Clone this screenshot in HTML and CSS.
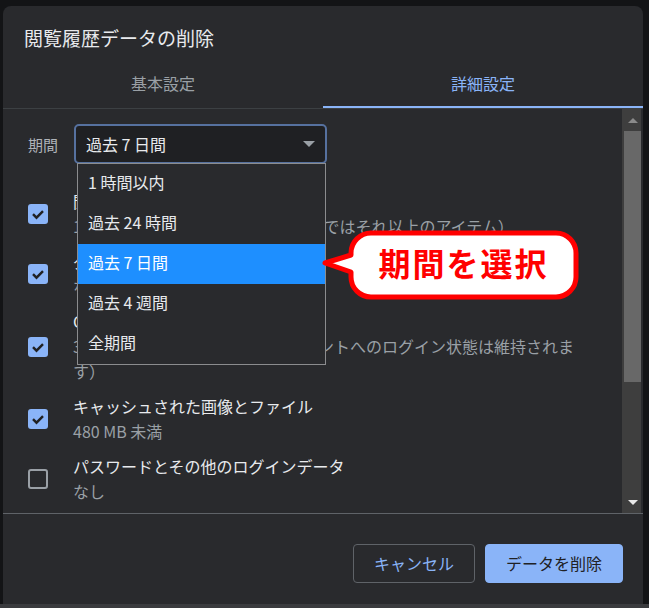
FILE: index.html
```html
<!DOCTYPE html>
<html lang="ja">
  <head>
    <meta charset="UTF-8" />
    <meta name="viewport" content="width=device-width, initial-scale=1.0" />
    <title>閲覧履歴データの削除</title>
    <link rel="stylesheet" href="styles.css">
  </head>
  <body>
    <div class="dialog">
      <h1 class="dialog-title">閲覧履歴データの削除</h1>

      <div class="tabs">
        <div class="tab">基本設定</div>
        <div class="tab active">詳細設定</div>
      </div>

      <div class="dialog-body">
        <div class="content">
          <div class="period-row">
            <span class="period-label">期間</span>
            <div class="select-wrap">
              <div class="select">
                <span>過去 7 日間</span>
                <span class="select-arrow"></span>
              </div>
              <ul class="dropdown">
                <li>1 時間以内</li>
                <li>過去 24 時間</li>
                <li class="selected">過去 7 日間</li>
                <li>過去 4 週間</li>
                <li>全期間</li>
              </ul>
            </div>
          </div>

          <div class="option-row">
            <span class="checkbox checked">
              <svg width="20" height="20" viewBox="0 0 20 20"><path d="M5 10.2 L8.5 13.7 L15 7.2" /></svg>
            </span>
            <div class="option-text">
              <div class="option-title">閲覧履歴</div>
              <div class="option-sub">1 件のアイテム（同期したデバイスではそれ以上のアイテム）</div>
            </div>
          </div>

          <div class="option-row">
            <span class="checkbox checked">
              <svg width="20" height="20" viewBox="0 0 20 20"><path d="M5 10.2 L8.5 13.7 L15 7.2" /></svg>
            </span>
            <div class="option-text">
              <div class="option-title">ダウンロード履歴</div>
              <div class="option-sub">なし</div>
            </div>
          </div>

          <div class="option-row">
            <span class="checkbox checked">
              <svg width="20" height="20" viewBox="0 0 20 20"><path d="M5 10.2 L8.5 13.7 L15 7.2" /></svg>
            </span>
            <div class="option-text">
              <div class="option-title">Cookie と他のサイトデータ</div>
              <div class="option-sub">3 個のサイトから（Google アカウントへのログイン状態は維持されます）</div>
            </div>
          </div>

          <div class="option-row">
            <span class="checkbox checked">
              <svg width="20" height="20" viewBox="0 0 20 20"><path d="M5 10.2 L8.5 13.7 L15 7.2" /></svg>
            </span>
            <div class="option-text">
              <div class="option-title">キャッシュされた画像とファイル</div>
              <div class="option-sub">480 MB 未満</div>
            </div>
          </div>

          <div class="option-row">
            <span class="checkbox"></span>
            <div class="option-text">
              <div class="option-title">パスワードとその他のログインデータ</div>
              <div class="option-sub">なし</div>
            </div>
          </div>
        </div>

        <div class="scrollbar">
          <div class="sb-btn"><span class="arrow-up"></span></div>
          <div class="sb-track"><div class="sb-thumb"></div></div>
          <div class="sb-btn"><span class="arrow-down"></span></div>
        </div>
      </div>

      <div class="dialog-footer">
        <button class="btn-cancel" type="button">キャンセル</button>
        <button class="btn-delete" type="button">データを削除</button>
      </div>

      <!-- 吹き出し -->
      <div class="callout">
        <svg width="262" height="80" viewBox="0 0 262 80">
          <path d="M49 5 H234 A20 20 0 0 1 254 25 V49 A20 20 0 0 1 234 69 H49 A20 20 0 0 1 29 49 V44 L3 35 L29 27 V25 A20 20 0 0 1 49 5 Z" />
        </svg>
        <span class="callout-text">期間を選択</span>
      </div>
    </div>
    <div class="bottom-bar"></div>
  </body>
</html>
```

FILE: styles.css
```css
html,
body {
  margin: 0;
  padding: 0;
  background-color: #131416;
}

body {
  font-family: "Noto Sans CJK JP", "Noto Sans", sans-serif;
  padding: 6px 0 0 3px;
  width: 649px;
  height: 608px;
  box-sizing: border-box;
  overflow: hidden;
}

.dialog {
  position: relative;
  width: 640px;
  height: 598px;
  background-color: #292a2d;
  border-radius: 8px 8px 0 0;
  display: flex;
  flex-direction: column;
}

.dialog-title {
  margin: 0;
  padding: 18px 21px 8px;
  font-size: 19px;
  font-weight: normal;
  line-height: 28px;
  color: #e8eaed;
}

.tabs {
  display: flex;
  border-bottom: 1px solid #3c4043;
}

.tab {
  flex: 1;
  height: 48px;
  box-sizing: border-box;
  padding-bottom: 3px;
  display: flex;
  align-items: center;
  justify-content: center;
  font-size: 16px;
  color: #9aa0a6;
}

.tab.active {
  color: #8ab4f8;
  box-shadow: inset 0 -2px 0 #8ab4f8;
}

.dialog-body {
  height: 405px;
  display: flex;
  border-bottom: 1px solid #5f6368;
  box-sizing: border-box;
}

.content {
  flex: 1;
  padding: 15px 0 0 25px;
  overflow: hidden;
  position: relative;
}

.period-row {
  display: flex;
  align-items: center;
  height: 40px;
  margin-bottom: 20px;
}

.period-label {
  width: 46px;
  font-size: 15px;
  color: #aeb3b9;
}

.select-wrap {
  position: relative;
}

.select {
  width: 253px;
  height: 40px;
  box-sizing: border-box;
  border: 2px solid #56719f;
  border-radius: 5px;
  background-color: #1f2023;
  padding: 0 10px 1px;
  display: flex;
  align-items: center;
  font-size: 16px;
  color: #e8eaed;
}

.select-arrow {
  margin-left: auto;
  border-left: 6px solid transparent;
  border-right: 6px solid transparent;
  border-top: 6px solid #9aa0a6;
}

.dropdown {
  position: absolute;
  left: 3px;
  top: 39px;
  width: 249px;
  margin: 0;
  padding: 0;
  list-style: none;
  box-sizing: border-box;
  background-color: #292a2d;
  border: 1px solid #8b8c8e;
  z-index: 2;
}

.dropdown li {
  height: 40px;
  line-height: 37px;
  padding-left: 10px;
  font-size: 16px;
  color: #e8eaed;
}

.dropdown li.selected {
  background-color: #1e8fff;
  color: #fff;
}

.option-row {
  display: flex;
  align-items: center;
  padding: 5px 0;
}

.checkbox {
  width: 20px;
  height: 20px;
  flex-shrink: 0;
  margin-right: 25px;
  box-sizing: border-box;
  border: 2px solid #9aa0a6;
  border-radius: 3px;
}

.checkbox.checked {
  border: none;
  background-color: #8ab4f8;
}

.checkbox svg {
  display: block;
}

.checkbox path {
  fill: none;
  stroke: #202124;
  stroke-width: 2.4;
}

.option-text {
  width: 512px;
  font-size: 16px;
  line-height: 25px;
}

.option-title {
  color: #e8eaed;
}

.option-sub {
  color: #9aa0a6;
}

.scrollbar {
  width: 19px;
  margin-right: 2px;
  background-color: #3e3e3e;
  display: flex;
  flex-direction: column;
}

.sb-btn {
  height: 22px;
  display: flex;
  align-items: center;
  justify-content: center;
  padding-left: 2px;
}

.arrow-up {
  border-left: 5px solid transparent;
  border-right: 5px solid transparent;
  border-bottom: 5px solid #8a8a8a;
}

.arrow-down {
  border-left: 5px solid transparent;
  border-right: 5px solid transparent;
  border-top: 5px solid #e8e8e8;
}

.sb-track {
  flex: 1;
  padding-left: 2px;
}

.sb-thumb {
  width: 17px;
  height: 251px;
  background-color: #686868;
}

.dialog-footer {
  flex: 1;
  display: flex;
  justify-content: flex-end;
  align-items: flex-start;
  gap: 10px;
  padding: 30px 20px 0 0;
}

.dialog-footer button {
  height: 39px;
  padding: 0 20px 1px;
  border-radius: 4px;
  font-family: inherit;
  font-size: 16px;
  cursor: pointer;
}

.btn-cancel {
  background-color: transparent;
  border: 1px solid #5f6368;
  color: #8ab4f8;
}

.btn-delete {
  background-color: #8ab4f8;
  border: 1px solid #8ab4f8;
  color: #202124;
}

.callout {
  position: absolute;
  left: 319px;
  top: 222px;
  width: 262px;
  height: 80px;
  z-index: 3;
}

.callout svg {
  position: absolute;
  left: 0;
  top: 0;
}

.callout path {
  fill: #fff;
  stroke: #ff0000;
  stroke-width: 5;
  stroke-linejoin: round;
}

.callout-text {
  position: absolute;
  left: 29px;
  top: 2px;
  width: 225px;
  height: 64px;
  display: flex;
  align-items: center;
  justify-content: center;
  font-size: 32px;
  font-weight: bold;
  letter-spacing: 2px;
  color: #ff0000;
}

.bottom-bar {
  position: absolute;
  left: 0;
  top: 604px;
  width: 649px;
  height: 4px;
  background-color: #3a3b3e;
}
```
